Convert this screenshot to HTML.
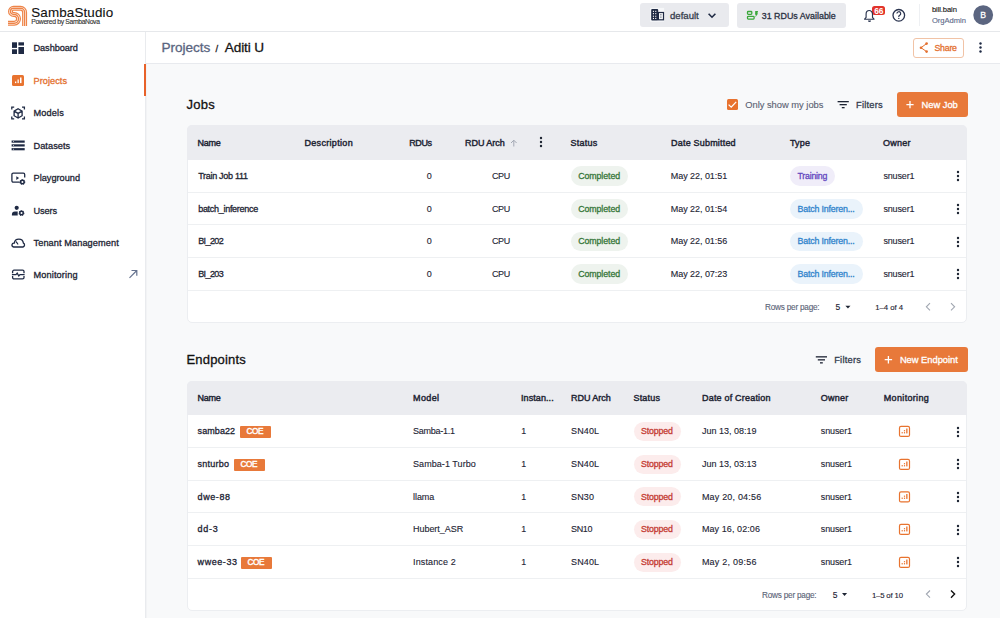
<!DOCTYPE html>
<html><head><meta charset="utf-8">
<style>
*{box-sizing:border-box;margin:0;padding:0}
html,body{width:1000px;height:618px;overflow:hidden;background:#f8f9fa;font-family:"Liberation Sans",sans-serif;position:relative}
.t{position:absolute;white-space:nowrap}
.r{position:absolute}
svg.ov{position:absolute;left:0;top:0;width:1000px;height:618px}
</style></head><body>
<div class="r" style="left:0.00px;top:0.00px;width:1000.00px;height:31.50px;background:#fff;"></div>
<div class="r" style="left:0.00px;top:31.00px;width:1000.00px;height:1.00px;background:#e6e8eb;"></div>
<div class="r" style="left:640.40px;top:3.00px;width:88.30px;height:24.00px;background:#e9eaee;border-radius:3px"></div>
<div class="r" style="left:736.90px;top:3.00px;width:108.80px;height:24.50px;background:#e9eaee;border-radius:3px"></div>
<div class="r" style="left:872.40px;top:5.60px;width:12.60px;height:9.40px;background:#e2332b;border-radius:2.5px"></div>
<div class="r" style="left:918.50px;top:4.20px;width:1.00px;height:21.60px;background:#eef0f3;"></div>
<div class="r" style="left:0.00px;top:32.00px;width:145.00px;height:586.00px;background:#fff;"></div>
<div class="r" style="left:144.50px;top:32.00px;width:1.00px;height:586.00px;background:#e9ebee;"></div>
<div class="r" style="left:145.50px;top:64.00px;width:1.00px;height:554.00px;background:#f2f3f5;"></div>
<div class="r" style="left:144.00px;top:64.00px;width:2.00px;height:32.00px;background:#e8622a;"></div>
<div class="r" style="left:145.50px;top:32.00px;width:854.50px;height:31.50px;background:#fff;"></div>
<div class="r" style="left:145.50px;top:63.30px;width:854.50px;height:0.90px;background:#e8eaee;"></div>
<div class="r" style="left:913.00px;top:38.00px;width:50.50px;height:19.50px;background:#fff;border:1px solid #f1c3a6;border-radius:3px"></div>
<div class="r" style="left:726.60px;top:98.90px;width:11.20px;height:11.30px;background:#e8722f;border-radius:1.5px"></div>
<div class="r" style="left:896.50px;top:92.20px;width:71.50px;height:24.50px;background:#e8793a;border-radius:3px"></div>
<div class="r" style="left:187.00px;top:125.00px;width:780.00px;height:197.50px;background:#fff;border:1px solid #eceef1;border-radius:5px"></div>
<div class="r" style="left:187.00px;top:125.00px;width:780.00px;height:34.50px;background:#ebecf0;border-radius:5px 5px 0 0"></div>
<div class="r" style="left:571.20px;top:166.30px;width:56.70px;height:19.60px;background:#eef3ee;border-radius:10px"></div>
<div class="r" style="left:789.80px;top:166.40px;width:45.20px;height:19.60px;background:#f0edf9;border-radius:10px"></div>
<div class="r" style="left:188.00px;top:192.00px;width:778.00px;height:1.00px;background:#eef0f2;"></div>
<div class="r" style="left:571.20px;top:199.30px;width:56.70px;height:19.60px;background:#eef3ee;border-radius:10px"></div>
<div class="r" style="left:789.80px;top:199.40px;width:73.10px;height:19.60px;background:#eaf3fb;border-radius:10px"></div>
<div class="r" style="left:188.00px;top:224.30px;width:778.00px;height:1.00px;background:#eef0f2;"></div>
<div class="r" style="left:571.20px;top:231.60px;width:56.70px;height:19.60px;background:#eef3ee;border-radius:10px"></div>
<div class="r" style="left:789.80px;top:231.70px;width:73.10px;height:19.60px;background:#eaf3fb;border-radius:10px"></div>
<div class="r" style="left:188.00px;top:256.80px;width:778.00px;height:1.00px;background:#eef0f2;"></div>
<div class="r" style="left:571.20px;top:264.10px;width:56.70px;height:19.60px;background:#eef3ee;border-radius:10px"></div>
<div class="r" style="left:789.80px;top:264.20px;width:73.10px;height:19.60px;background:#eaf3fb;border-radius:10px"></div>
<div class="r" style="left:188.00px;top:289.50px;width:778.00px;height:1.00px;background:#eef0f2;"></div>
<div class="r" style="left:875.20px;top:347.20px;width:92.80px;height:24.60px;background:#e8793a;border-radius:3px"></div>
<div class="r" style="left:187.00px;top:381.00px;width:780.00px;height:230.00px;background:#fff;border:1px solid #eceef1;border-radius:5px"></div>
<div class="r" style="left:187.00px;top:381.00px;width:780.00px;height:33.50px;background:#ebecf0;border-radius:5px 5px 0 0"></div>
<div class="r" style="left:239.50px;top:425.50px;width:31.50px;height:12.00px;background:#e8793a;border-radius:1px"></div>
<div class="r" style="left:633.80px;top:421.80px;width:46.80px;height:19.10px;background:#fcecec;border-radius:10px"></div>
<div class="r" style="left:188.00px;top:447.00px;width:778.00px;height:1.00px;background:#eef0f2;"></div>
<div class="r" style="left:233.50px;top:458.50px;width:31.50px;height:12.00px;background:#e8793a;border-radius:1px"></div>
<div class="r" style="left:633.80px;top:454.80px;width:46.80px;height:19.10px;background:#fcecec;border-radius:10px"></div>
<div class="r" style="left:188.00px;top:479.50px;width:778.00px;height:1.00px;background:#eef0f2;"></div>
<div class="r" style="left:633.80px;top:487.30px;width:46.80px;height:19.10px;background:#fcecec;border-radius:10px"></div>
<div class="r" style="left:188.00px;top:512.00px;width:778.00px;height:1.00px;background:#eef0f2;"></div>
<div class="r" style="left:633.80px;top:519.80px;width:46.80px;height:19.10px;background:#fcecec;border-radius:10px"></div>
<div class="r" style="left:188.00px;top:545.00px;width:778.00px;height:1.00px;background:#eef0f2;"></div>
<div class="r" style="left:240.50px;top:556.50px;width:31.50px;height:12.00px;background:#e8793a;border-radius:1px"></div>
<div class="r" style="left:633.80px;top:552.80px;width:46.80px;height:19.10px;background:#fcecec;border-radius:10px"></div>
<div class="r" style="left:188.00px;top:578.00px;width:778.00px;height:1.00px;background:#eef0f2;"></div>
<svg class="ov" width="1000" height="618" viewBox="0 0 1000 618"><g fill="none"><path d="M8,23.2 H14.2 A4.35,4.35 0 0 0 14.2,14.5 H13.6 A3.1,3.1 0 0 1 13.6,8.3 H20.5 A4.1,4.1 0 0 1 24.6,12.4 V26" stroke="#ee8448" stroke-width="5"/><path d="M8,23.2 H14.2 A4.35,4.35 0 0 0 14.2,14.5 H13.6 A3.1,3.1 0 0 1 13.6,8.3 H20.5 A4.1,4.1 0 0 1 24.6,12.4 V26" stroke="#fff" stroke-width="2.6"/><path d="M8,23.2 H14.2 A4.35,4.35 0 0 0 14.2,14.5 H13.6 A3.1,3.1 0 0 1 13.6,8.3 H20.5 A4.1,4.1 0 0 1 24.6,12.4 V26" stroke="#ee8448" stroke-width="1.4"/></g><rect x="650.2" y="7.9" width="13.9" height="13.9" fill="#f6f7f9"/><rect x="651.2" y="9" width="7" height="11.4" rx="1" fill="#1f2a44"/><rect x="658.4" y="12.5" width="5.1" height="7.3" fill="none" stroke="#1f2a44" stroke-width="1.2"/><g fill="#fff"><rect x="652.9" y="10.8" width="1.1" height="1.1"/><rect x="655.2" y="10.8" width="1.1" height="1.1"/><rect x="652.9" y="13.1" width="1.1" height="1.1"/><rect x="655.2" y="13.1" width="1.1" height="1.1"/><rect x="652.9" y="15.7" width="1.1" height="1.1"/><rect x="655.2" y="15.7" width="1.1" height="1.1"/><rect x="652.9" y="17.9" width="1.1" height="1.1"/><rect x="655.2" y="17.9" width="1.1" height="1.1"/></g><g fill="#1f2a44"><rect x="660.4" y="14.3" width="1" height="1"/><rect x="660.4" y="16.6" width="1" height="1"/></g><path d="M708.6,13.8 L712,17.2 L715.4,13.8" fill="none" stroke="#1f2a44" stroke-width="1.6"/><g fill="none" stroke="#3aa83a" stroke-width="1.3"><rect x="747.5" y="11.5" width="4.3" height="2.8" rx="0.8"/><rect x="747.5" y="16.3" width="6.6" height="2.8" rx="0.8"/></g><path d="M755.2,11 H758.1 L757.3,13.4 H758.1 L755.3,17.3 L755.9,14.7 H755.1 Z" fill="#3aa83a"/><path d="M864.6,19.2 h9.4 l-1.5,-1.8 v-3.3 a3.2,3.6 0 0 0 -6.4,0 v3.3z" fill="none" stroke="#2b3550" stroke-width="1.15" stroke-linejoin="round"/><path d="M868,20.6 a1.5,1.5 0 0 0 3,0" fill="#2b3550"/><circle cx="898.8" cy="15.3" r="5.8" fill="none" stroke="#2b3550" stroke-width="1.3"/><path d="M896.9,13.6 a1.9,1.9 0 1 1 2.6,1.8 c-0.5,0.2 -0.7,0.6 -0.7,1.2 v0.4" fill="none" stroke="#2b3550" stroke-width="1.2"/><circle cx="898.8" cy="18.4" r="0.7" fill="#2b3550"/><circle cx="983.2" cy="15.1" r="9.9" fill="#5b6580"/><g fill="#1f2a44"><rect x="12" y="42.3" width="5" height="5.6"/><rect x="18.4" y="42.3" width="5.6" height="3.2"/><rect x="12" y="49.3" width="5" height="4.7"/><rect x="18.4" y="47" width="5.6" height="7"/></g><rect x="12" y="75" width="12" height="11" rx="1.5" fill="#e8732f"/><g fill="#fff"><rect x="15" y="81.5" width="1.3" height="1.6"/><rect x="17.5" y="79.5" width="1.3" height="3.6"/><rect x="20" y="77.5" width="1.5" height="5.6"/></g><g fill="none" stroke="#1f2a44" stroke-width="1.3"><path d="M11.8,109.5 v-2.4 h2.4 M22,107.1 h2.4 v2.4 M24.4,116.5 v2.4 h-2.4 M14.2,118.9 h-2.4 v-2.4"/><path d="M18.1,108.8 l4,2.3 v4.6 l-4,2.3 l-4,-2.3 v-4.6z M14.1,111.1 l4,2.3 l4,-2.3 M18.1,113.4 v4.6"/></g><g fill="#1f2a44"><rect x="11.6" y="140.5" width="13.1" height="2.2"/><rect x="11.6" y="144.3" width="13.1" height="2.2"/><rect x="11.6" y="148.1" width="13.1" height="2.2"/></g><g fill="#fff"><rect x="13" y="141.2" width="0.8" height="0.8"/><rect x="13" y="145" width="0.8" height="0.8"/><rect x="13" y="148.8" width="0.8" height="0.8"/></g><path d="M19.8,182.1 h-6.6 a1.3,1.3 0 0 1 -1.3,-1.3 v-6.3 a1.3,1.3 0 0 1 1.3,-1.3 h10.2 a1.3,1.3 0 0 1 1.3,1.3 v3" fill="none" stroke="#1f2a44" stroke-width="1.3"/><path d="M16.3,176.2 v3.7 l2.8,-1.85z" fill="#1f2a44"/><circle cx="22.4" cy="182" r="1.75" fill="none" stroke="#1f2a44" stroke-width="1.5"/><circle cx="22.4" cy="182" r="2.35" fill="none" stroke="#1f2a44" stroke-width="1.1" stroke-dasharray="0.95 0.9"/><circle cx="16.7" cy="207.8" r="2.1" fill="#1f2a44"/><path d="M11.9,215.6 v-1.2 a3,3 0 0 1 3,-3 h2.8 v4.2z" fill="#1f2a44"/><circle cx="21.5" cy="213.1" r="1.75" fill="none" stroke="#1f2a44" stroke-width="1.5"/><circle cx="21.5" cy="213.1" r="2.35" fill="none" stroke="#1f2a44" stroke-width="1.1" stroke-dasharray="0.95 0.9"/><path d="M13.6,247 H23 A2.1,2.1 0 0 0 23.4,243.1 A4.6,4.6 0 0 0 14.3,243.1 A1.95,1.95 0 0 0 13.6,247z" fill="none" stroke="#1f2a44" stroke-width="1.3"/><path d="M16.3,241.9 l1.5,2.1" stroke="#1f2a44" stroke-width="1.2" stroke-linecap="round"/><g fill="none" stroke="#1f2a44" stroke-width="1.3"><path d="M12.6,273.2 v-1.6 a1.4,1.4 0 0 1 1.4,-1.4 h8.6 a1.4,1.4 0 0 1 1.4,1.4 v1.6 M12.6,275.9 v1.6 a1.4,1.4 0 0 0 1.4,1.4 h8.6 a1.4,1.4 0 0 0 1.4,-1.4 v-1.6"/><path d="M11.9,274.6 h4.1 l1.2,-1.4 l1.6,2.8 l1.2,-1.4 h4.6"/></g><path d="M129.5,277.8 l7.3,-7.3 M131.5,270.5 h5.3 v5.3" fill="none" stroke="#66738f" stroke-width="1.2"/><g fill="#e4702f"><circle cx="926.6" cy="43.6" r="1.3"/><circle cx="921" cy="47.7" r="1.3"/><circle cx="926.6" cy="51.6" r="1.3"/></g><path d="M926.6,43.6 L921,47.7 L926.6,51.6" fill="none" stroke="#e4702f" stroke-width="1"/><g fill="#1f2a44"><circle cx="980.5" cy="43.5" r="1.2"/><circle cx="980.5" cy="47.5" r="1.2"/><circle cx="980.5" cy="51.5" r="1.2"/></g><path d="M728.6,104.6 l2.6,2.5 l5,-5.2" fill="none" stroke="#fff" stroke-width="1.3"/><g fill="#1d2433"><rect x="837.6" y="101" width="11.2" height="1.3"/><rect x="839.6" y="104" width="7.2" height="1.3"/><rect x="841.8000000000001" y="107" width="2.8" height="1.3"/></g><path d="M910,101 v7.2 M906.4,104.6 h7.2" stroke="#fff" stroke-width="1.3"/><path d="M513.8,146.5 v-6.2 M511,143 l2.8,-2.8 l2.8,2.8" fill="none" stroke="#a3a9b4" stroke-width="1"/><g fill="#1d2433"><circle cx="541" cy="138" r="1.2"/><circle cx="541" cy="142" r="1.2"/><circle cx="541" cy="146" r="1.2"/></g><g fill="#1d2433"><circle cx="958" cy="172" r="1.2"/><circle cx="958" cy="176" r="1.2"/><circle cx="958" cy="180" r="1.2"/></g><g fill="#1d2433"><circle cx="958" cy="205" r="1.2"/><circle cx="958" cy="209" r="1.2"/><circle cx="958" cy="213" r="1.2"/></g><g fill="#1d2433"><circle cx="958" cy="238" r="1.2"/><circle cx="958" cy="242" r="1.2"/><circle cx="958" cy="246" r="1.2"/></g><g fill="#1d2433"><circle cx="958" cy="270" r="1.2"/><circle cx="958" cy="274" r="1.2"/><circle cx="958" cy="278" r="1.2"/></g><path d="M845.4,305.8 h5.1 l-2.55,2.8z" fill="#1d2433"/><path d="M930,303.2 l-3.6,3.6 l3.6,3.6" fill="none" stroke="#a0a6b0" stroke-width="1.1"/><path d="M951,303.2 l3.6,3.6 l-3.6,3.6" fill="none" stroke="#a0a6b0" stroke-width="1.1"/><g fill="#1d2433"><rect x="815.8" y="356.2" width="11.2" height="1.3"/><rect x="817.8" y="359.2" width="7.2" height="1.3"/><rect x="820.0" y="362.2" width="2.8" height="1.3"/></g><path d="M888.4,356 v7.4 M884.7,359.7 h7.4" stroke="#fff" stroke-width="1.3"/><rect x="899.5" y="426.4" width="10" height="10" rx="1.5" fill="none" stroke="#e8732f" stroke-width="1.2"/><g fill="#e8732f"><rect x="901.6" y="432.1" width="1.2" height="1.3"/><rect x="903.9" y="430.1" width="1.2" height="1.2"/><rect x="903.9" y="432.1" width="1.2" height="1.3"/><rect x="906.2" y="428.5" width="1.3" height="4.9"/></g><g fill="#1d2433"><circle cx="958" cy="428" r="1.2"/><circle cx="958" cy="432" r="1.2"/><circle cx="958" cy="436" r="1.2"/></g><rect x="899.5" y="459.4" width="10" height="10" rx="1.5" fill="none" stroke="#e8732f" stroke-width="1.2"/><g fill="#e8732f"><rect x="901.6" y="465.1" width="1.2" height="1.3"/><rect x="903.9" y="463.1" width="1.2" height="1.2"/><rect x="903.9" y="465.1" width="1.2" height="1.3"/><rect x="906.2" y="461.5" width="1.3" height="4.9"/></g><g fill="#1d2433"><circle cx="958" cy="460" r="1.2"/><circle cx="958" cy="464" r="1.2"/><circle cx="958" cy="468" r="1.2"/></g><rect x="899.5" y="491.9" width="10" height="10" rx="1.5" fill="none" stroke="#e8732f" stroke-width="1.2"/><g fill="#e8732f"><rect x="901.6" y="497.6" width="1.2" height="1.3"/><rect x="903.9" y="495.6" width="1.2" height="1.2"/><rect x="903.9" y="497.6" width="1.2" height="1.3"/><rect x="906.2" y="494" width="1.3" height="4.9"/></g><g fill="#1d2433"><circle cx="958" cy="493" r="1.2"/><circle cx="958" cy="497" r="1.2"/><circle cx="958" cy="501" r="1.2"/></g><rect x="899.5" y="524.4" width="10" height="10" rx="1.5" fill="none" stroke="#e8732f" stroke-width="1.2"/><g fill="#e8732f"><rect x="901.6" y="530.1" width="1.2" height="1.3"/><rect x="903.9" y="528.1" width="1.2" height="1.2"/><rect x="903.9" y="530.1" width="1.2" height="1.3"/><rect x="906.2" y="526.5" width="1.3" height="4.9"/></g><g fill="#1d2433"><circle cx="958" cy="526" r="1.2"/><circle cx="958" cy="530" r="1.2"/><circle cx="958" cy="534" r="1.2"/></g><rect x="899.5" y="557.4" width="10" height="10" rx="1.5" fill="none" stroke="#e8732f" stroke-width="1.2"/><g fill="#e8732f"><rect x="901.6" y="563.1" width="1.2" height="1.3"/><rect x="903.9" y="561.1" width="1.2" height="1.2"/><rect x="903.9" y="563.1" width="1.2" height="1.3"/><rect x="906.2" y="559.5" width="1.3" height="4.9"/></g><g fill="#1d2433"><circle cx="958" cy="558" r="1.2"/><circle cx="958" cy="562" r="1.2"/><circle cx="958" cy="566" r="1.2"/></g><path d="M842,593.1 h5.1 l-2.55,2.8z" fill="#1d2433"/><path d="M930,590.5 l-3.6,3.6 l3.6,3.6" fill="none" stroke="#a0a6b0" stroke-width="1.1"/><path d="M951,590.5 l3.6,3.6 l-3.6,3.6" fill="none" stroke="#111" stroke-width="1.4"/></svg>
<div class="t" style="left:31.20px;top:2.85px;font-size:13.40px;line-height:20px;font-weight:normal;color:#111;-webkit-text-stroke:0.12px #111;letter-spacing:0.155px;">SambaStudio</div>
<div class="t" style="left:31.20px;top:12.30px;font-size:6.80px;line-height:20px;font-weight:normal;color:#333;-webkit-text-stroke:0.12px #333;letter-spacing:-0.338px;">Powered by SambaNova</div>
<div class="t" style="left:670.00px;top:5.50px;font-size:9.60px;line-height:20px;font-weight:normal;color:#363d4d;-webkit-text-stroke:0.3px #363d4d;letter-spacing:-0.004px;">default</div>
<div class="t" style="left:761.70px;top:5.90px;font-size:8.90px;line-height:20px;font-weight:normal;color:#2a3142;-webkit-text-stroke:0.3px #2a3142;letter-spacing:0.016px;">31 RDUs Available</div>
<div class="t" style="left:872.40px;top:0.90px;font-size:8.40px;line-height:20px;font-weight:bold;color:#fff;width:12.6px;text-align:center;letter-spacing:-0.3px">66</div>
<div class="t" style="left:932.00px;top:0.00px;font-size:7.60px;line-height:20px;font-weight:normal;color:#111;-webkit-text-stroke:0.12px #111;letter-spacing:-0.109px;">bill.bain</div>
<div class="t" style="left:932.00px;top:11.40px;font-size:7.60px;line-height:20px;font-weight:normal;color:#5d6a8a;-webkit-text-stroke:0.12px #5d6a8a;letter-spacing:-0.045px;">OrgAdmin</div>
<div class="t" style="left:973.30px;top:5.40px;font-size:8.60px;line-height:20px;font-weight:normal;color:#fff;-webkit-text-stroke:0.3px #fff;width:19.8px;text-align:center">B</div>
<div class="t" style="left:33.50px;top:38.30px;font-size:9.20px;line-height:20px;font-weight:normal;color:#1d2433;-webkit-text-stroke:0.3px #1d2433;letter-spacing:-0.064px;">Dashboard</div>
<div class="t" style="left:33.50px;top:70.80px;font-size:9.20px;line-height:20px;font-weight:normal;color:#e4702f;-webkit-text-stroke:0.3px #e4702f;letter-spacing:0.052px;">Projects</div>
<div class="t" style="left:33.50px;top:103.20px;font-size:9.20px;line-height:20px;font-weight:normal;color:#1d2433;-webkit-text-stroke:0.3px #1d2433;letter-spacing:0.128px;">Models</div>
<div class="t" style="left:33.50px;top:136.00px;font-size:9.20px;line-height:20px;font-weight:normal;color:#1d2433;-webkit-text-stroke:0.3px #1d2433;letter-spacing:0.056px;">Datasets</div>
<div class="t" style="left:33.50px;top:168.30px;font-size:9.20px;line-height:20px;font-weight:normal;color:#1d2433;-webkit-text-stroke:0.3px #1d2433;letter-spacing:0.006px;">Playground</div>
<div class="t" style="left:33.50px;top:201.00px;font-size:9.20px;line-height:20px;font-weight:normal;color:#1d2433;-webkit-text-stroke:0.3px #1d2433;letter-spacing:-0.106px;">Users</div>
<div class="t" style="left:33.50px;top:233.30px;font-size:9.20px;line-height:20px;font-weight:normal;color:#1d2433;-webkit-text-stroke:0.3px #1d2433;letter-spacing:0.089px;">Tenant Management</div>
<div class="t" style="left:33.50px;top:264.50px;font-size:9.20px;line-height:20px;font-weight:normal;color:#1d2433;-webkit-text-stroke:0.3px #1d2433;letter-spacing:0.127px;">Monitoring</div>
<div class="t" style="left:161.60px;top:38.20px;font-size:13.60px;line-height:20px;font-weight:normal;color:#5a6580;-webkit-text-stroke:0.3px #5a6580;letter-spacing:-0.047px;">Projects</div>
<div class="t" style="left:215.60px;top:39.20px;font-size:9.50px;line-height:20px;font-weight:normal;color:#222;-webkit-text-stroke:0.3px #222;">/</div>
<div class="t" style="left:224.80px;top:38.20px;font-size:13.60px;line-height:20px;font-weight:normal;color:#141414;-webkit-text-stroke:0.3px #141414;letter-spacing:-0.143px;">Aditi U</div>
<div class="t" style="left:934.50px;top:38.00px;font-size:8.80px;line-height:20px;font-weight:normal;color:#e4702f;-webkit-text-stroke:0.3px #e4702f;letter-spacing:-0.246px;">Share</div>
<div class="t" style="left:186.50px;top:95.00px;font-size:13.00px;line-height:20px;font-weight:normal;color:#111;-webkit-text-stroke:0.3px #111;letter-spacing:0.247px;">Jobs</div>
<div class="t" style="left:745.20px;top:95.20px;font-size:9.33px;line-height:20px;font-weight:normal;color:#5b6272;-webkit-text-stroke:0.12px #5b6272;">Only show my jobs</div>
<div class="t" style="left:856.00px;top:95.00px;font-size:9.30px;line-height:20px;font-weight:normal;color:#333b4d;-webkit-text-stroke:0.3px #333b4d;letter-spacing:0.231px;">Filters</div>
<div class="t" style="left:921.60px;top:94.90px;font-size:9.40px;line-height:20px;font-weight:normal;color:#fff;-webkit-text-stroke:0.3px #fff;letter-spacing:-0.045px;">New Job</div>
<div class="t" style="left:197.40px;top:132.80px;font-size:9.00px;line-height:20px;font-weight:normal;color:#1d2433;-webkit-text-stroke:0.42px #1d2433;letter-spacing:-0.203px;">Name</div>
<div class="t" style="left:304.40px;top:132.80px;font-size:9.00px;line-height:20px;font-weight:normal;color:#1d2433;-webkit-text-stroke:0.42px #1d2433;letter-spacing:0.328px;">Description</div>
<div class="t" style="left:465.00px;top:132.80px;font-size:9.00px;line-height:20px;font-weight:normal;color:#1d2433;-webkit-text-stroke:0.42px #1d2433;letter-spacing:-0.044px;">RDU Arch</div>
<div class="t" style="left:570.60px;top:132.80px;font-size:9.00px;line-height:20px;font-weight:normal;color:#1d2433;-webkit-text-stroke:0.42px #1d2433;letter-spacing:0.237px;">Status</div>
<div class="t" style="left:671.10px;top:132.80px;font-size:9.00px;line-height:20px;font-weight:normal;color:#1d2433;-webkit-text-stroke:0.42px #1d2433;letter-spacing:0.190px;">Date Submitted</div>
<div class="t" style="left:789.90px;top:132.80px;font-size:9.00px;line-height:20px;font-weight:normal;color:#1d2433;-webkit-text-stroke:0.42px #1d2433;letter-spacing:0.196px;">Type</div>
<div class="t" style="left:882.90px;top:132.80px;font-size:9.00px;line-height:20px;font-weight:normal;color:#1d2433;-webkit-text-stroke:0.42px #1d2433;letter-spacing:0.273px;">Owner</div>
<div class="t" style="left:409.30px;top:132.80px;font-size:9.00px;line-height:20px;font-weight:normal;color:#1d2433;-webkit-text-stroke:0.42px #1d2433;letter-spacing:-0.433px;">RDUs</div>
<div class="t" style="left:198.20px;top:166.10px;font-size:9.00px;line-height:20px;font-weight:normal;color:#1d2433;-webkit-text-stroke:0.3px #1d2433;letter-spacing:-0.297px;">Train Job 111</div>
<div class="t" style="left:426.80px;top:166.10px;font-size:9.00px;line-height:20px;font-weight:normal;color:#1d2433;-webkit-text-stroke:0.12px #1d2433;">0</div>
<div class="t" style="left:492.00px;top:166.10px;font-size:9.00px;line-height:20px;font-weight:normal;color:#1d2433;-webkit-text-stroke:0.12px #1d2433;letter-spacing:-0.401px;">CPU</div>
<div class="t" style="left:578.20px;top:166.10px;font-size:8.80px;line-height:20px;font-weight:normal;color:#37773a;-webkit-text-stroke:0.3px #37773a;letter-spacing:-0.070px;">Completed</div>
<div class="t" style="left:670.80px;top:166.10px;font-size:9.00px;line-height:20px;font-weight:normal;color:#1d2433;-webkit-text-stroke:0.12px #1d2433;letter-spacing:-0.053px;">May 22, 01:51</div>
<div class="t" style="left:797.50px;top:166.10px;font-size:8.80px;line-height:20px;font-weight:normal;color:#6448c0;-webkit-text-stroke:0.3px #6448c0;letter-spacing:-0.224px;">Training</div>
<div class="t" style="left:883.40px;top:166.10px;font-size:9.00px;line-height:20px;font-weight:normal;color:#1d2433;-webkit-text-stroke:0.12px #1d2433;letter-spacing:-0.136px;">snuser1</div>
<div class="t" style="left:198.20px;top:199.10px;font-size:9.00px;line-height:20px;font-weight:normal;color:#1d2433;-webkit-text-stroke:0.3px #1d2433;letter-spacing:-0.289px;">batch_inference</div>
<div class="t" style="left:426.80px;top:199.10px;font-size:9.00px;line-height:20px;font-weight:normal;color:#1d2433;-webkit-text-stroke:0.12px #1d2433;">0</div>
<div class="t" style="left:492.00px;top:199.10px;font-size:9.00px;line-height:20px;font-weight:normal;color:#1d2433;-webkit-text-stroke:0.12px #1d2433;letter-spacing:-0.401px;">CPU</div>
<div class="t" style="left:578.20px;top:199.10px;font-size:8.80px;line-height:20px;font-weight:normal;color:#37773a;-webkit-text-stroke:0.3px #37773a;letter-spacing:-0.070px;">Completed</div>
<div class="t" style="left:670.80px;top:199.10px;font-size:9.00px;line-height:20px;font-weight:normal;color:#1d2433;-webkit-text-stroke:0.12px #1d2433;letter-spacing:-0.053px;">May 22, 01:54</div>
<div class="t" style="left:797.50px;top:199.10px;font-size:8.80px;line-height:20px;font-weight:normal;color:#3084cc;-webkit-text-stroke:0.3px #3084cc;letter-spacing:-0.165px;">Batch Inferen...</div>
<div class="t" style="left:883.40px;top:199.10px;font-size:9.00px;line-height:20px;font-weight:normal;color:#1d2433;-webkit-text-stroke:0.12px #1d2433;letter-spacing:-0.136px;">snuser1</div>
<div class="t" style="left:198.20px;top:231.40px;font-size:9.00px;line-height:20px;font-weight:normal;color:#1d2433;-webkit-text-stroke:0.3px #1d2433;letter-spacing:-0.585px;">BI_202</div>
<div class="t" style="left:426.80px;top:231.40px;font-size:9.00px;line-height:20px;font-weight:normal;color:#1d2433;-webkit-text-stroke:0.12px #1d2433;">0</div>
<div class="t" style="left:492.00px;top:231.40px;font-size:9.00px;line-height:20px;font-weight:normal;color:#1d2433;-webkit-text-stroke:0.12px #1d2433;letter-spacing:-0.401px;">CPU</div>
<div class="t" style="left:578.20px;top:231.40px;font-size:8.80px;line-height:20px;font-weight:normal;color:#37773a;-webkit-text-stroke:0.3px #37773a;letter-spacing:-0.070px;">Completed</div>
<div class="t" style="left:670.80px;top:231.40px;font-size:9.00px;line-height:20px;font-weight:normal;color:#1d2433;-webkit-text-stroke:0.12px #1d2433;letter-spacing:-0.053px;">May 22, 01:56</div>
<div class="t" style="left:797.50px;top:231.40px;font-size:8.80px;line-height:20px;font-weight:normal;color:#3084cc;-webkit-text-stroke:0.3px #3084cc;letter-spacing:-0.165px;">Batch Inferen...</div>
<div class="t" style="left:883.40px;top:231.40px;font-size:9.00px;line-height:20px;font-weight:normal;color:#1d2433;-webkit-text-stroke:0.12px #1d2433;letter-spacing:-0.136px;">snuser1</div>
<div class="t" style="left:198.20px;top:263.90px;font-size:9.00px;line-height:20px;font-weight:normal;color:#1d2433;-webkit-text-stroke:0.3px #1d2433;letter-spacing:-0.585px;">BI_203</div>
<div class="t" style="left:426.80px;top:263.90px;font-size:9.00px;line-height:20px;font-weight:normal;color:#1d2433;-webkit-text-stroke:0.12px #1d2433;">0</div>
<div class="t" style="left:492.00px;top:263.90px;font-size:9.00px;line-height:20px;font-weight:normal;color:#1d2433;-webkit-text-stroke:0.12px #1d2433;letter-spacing:-0.401px;">CPU</div>
<div class="t" style="left:578.20px;top:263.90px;font-size:8.80px;line-height:20px;font-weight:normal;color:#37773a;-webkit-text-stroke:0.3px #37773a;letter-spacing:-0.070px;">Completed</div>
<div class="t" style="left:670.80px;top:263.90px;font-size:9.00px;line-height:20px;font-weight:normal;color:#1d2433;-webkit-text-stroke:0.12px #1d2433;letter-spacing:-0.053px;">May 22, 07:23</div>
<div class="t" style="left:797.50px;top:263.90px;font-size:8.80px;line-height:20px;font-weight:normal;color:#3084cc;-webkit-text-stroke:0.3px #3084cc;letter-spacing:-0.165px;">Batch Inferen...</div>
<div class="t" style="left:883.40px;top:263.90px;font-size:9.00px;line-height:20px;font-weight:normal;color:#1d2433;-webkit-text-stroke:0.12px #1d2433;letter-spacing:-0.136px;">snuser1</div>
<div class="t" style="left:765.00px;top:298.30px;font-size:8.20px;line-height:20px;font-weight:normal;color:#5b6478;-webkit-text-stroke:0.12px #5b6478;letter-spacing:-0.210px;">Rows per page:</div>
<div class="t" style="left:835.60px;top:297.30px;font-size:8.50px;line-height:20px;font-weight:normal;color:#1d2433;-webkit-text-stroke:0.12px #1d2433;">5</div>
<div class="t" style="left:875.30px;top:298.30px;font-size:7.80px;line-height:20px;font-weight:normal;color:#1d2433;-webkit-text-stroke:0.12px #1d2433;letter-spacing:-0.070px;">1–4 of 4</div>
<div class="t" style="left:186.50px;top:350.30px;font-size:13.00px;line-height:20px;font-weight:normal;color:#111;-webkit-text-stroke:0.3px #111;letter-spacing:0.172px;">Endpoints</div>
<div class="t" style="left:834.20px;top:350.40px;font-size:9.30px;line-height:20px;font-weight:normal;color:#333b4d;-webkit-text-stroke:0.3px #333b4d;letter-spacing:0.231px;">Filters</div>
<div class="t" style="left:899.90px;top:350.40px;font-size:9.40px;line-height:20px;font-weight:normal;color:#fff;-webkit-text-stroke:0.3px #fff;letter-spacing:-0.039px;">New Endpoint</div>
<div class="t" style="left:197.40px;top:388.00px;font-size:9.00px;line-height:20px;font-weight:normal;color:#1d2433;-webkit-text-stroke:0.42px #1d2433;letter-spacing:-0.203px;">Name</div>
<div class="t" style="left:413.00px;top:388.00px;font-size:9.00px;line-height:20px;font-weight:normal;color:#1d2433;-webkit-text-stroke:0.42px #1d2433;letter-spacing:0.397px;">Model</div>
<div class="t" style="left:521.00px;top:388.00px;font-size:9.00px;line-height:20px;font-weight:normal;color:#1d2433;-webkit-text-stroke:0.42px #1d2433;letter-spacing:0.085px;">Instan...</div>
<div class="t" style="left:571.00px;top:388.00px;font-size:9.00px;line-height:20px;font-weight:normal;color:#1d2433;-webkit-text-stroke:0.42px #1d2433;letter-spacing:-0.044px;">RDU Arch</div>
<div class="t" style="left:633.40px;top:388.00px;font-size:9.00px;line-height:20px;font-weight:normal;color:#1d2433;-webkit-text-stroke:0.42px #1d2433;letter-spacing:0.237px;">Status</div>
<div class="t" style="left:702.00px;top:388.00px;font-size:9.00px;line-height:20px;font-weight:normal;color:#1d2433;-webkit-text-stroke:0.42px #1d2433;letter-spacing:0.198px;">Date of Creation</div>
<div class="t" style="left:820.80px;top:388.00px;font-size:9.00px;line-height:20px;font-weight:normal;color:#1d2433;-webkit-text-stroke:0.42px #1d2433;letter-spacing:0.248px;">Owner</div>
<div class="t" style="left:883.80px;top:388.00px;font-size:9.00px;line-height:20px;font-weight:normal;color:#1d2433;-webkit-text-stroke:0.42px #1d2433;letter-spacing:0.331px;">Monitoring</div>
<div class="t" style="left:197.60px;top:421.10px;font-size:9.00px;line-height:20px;font-weight:normal;color:#1d2433;-webkit-text-stroke:0.3px #1d2433;letter-spacing:0.079px;">samba22</div>
<div class="t" style="left:246.50px;top:422.30px;font-size:8.20px;line-height:20px;font-weight:normal;color:#fff;-webkit-text-stroke:0.42px #fff;letter-spacing:-0.385px;">COE</div>
<div class="t" style="left:413.00px;top:421.10px;font-size:9.00px;line-height:20px;font-weight:normal;color:#1d2433;-webkit-text-stroke:0.12px #1d2433;letter-spacing:-0.253px;">Samba-1.1</div>
<div class="t" style="left:521.20px;top:421.10px;font-size:8.90px;line-height:20px;font-weight:normal;color:#1d2433;-webkit-text-stroke:0.12px #1d2433;">1</div>
<div class="t" style="left:571.00px;top:421.10px;font-size:9.00px;line-height:20px;font-weight:normal;color:#1d2433;-webkit-text-stroke:0.12px #1d2433;letter-spacing:0.145px;">SN40L</div>
<div class="t" style="left:641.00px;top:421.10px;font-size:8.80px;line-height:20px;font-weight:normal;color:#c53b33;-webkit-text-stroke:0.3px #c53b33;letter-spacing:-0.131px;">Stopped</div>
<div class="t" style="left:701.90px;top:421.10px;font-size:9.00px;line-height:20px;font-weight:normal;color:#1d2433;-webkit-text-stroke:0.12px #1d2433;letter-spacing:-0.004px;">Jun 13, 08:19</div>
<div class="t" style="left:820.80px;top:421.10px;font-size:9.00px;line-height:20px;font-weight:normal;color:#1d2433;-webkit-text-stroke:0.12px #1d2433;letter-spacing:-0.136px;">snuser1</div>
<div class="t" style="left:197.60px;top:454.10px;font-size:9.00px;line-height:20px;font-weight:normal;color:#1d2433;-webkit-text-stroke:0.3px #1d2433;letter-spacing:0.247px;">snturbo</div>
<div class="t" style="left:240.50px;top:455.30px;font-size:8.20px;line-height:20px;font-weight:normal;color:#fff;-webkit-text-stroke:0.42px #fff;letter-spacing:-0.385px;">COE</div>
<div class="t" style="left:413.00px;top:454.10px;font-size:9.00px;line-height:20px;font-weight:normal;color:#1d2433;-webkit-text-stroke:0.12px #1d2433;letter-spacing:0.064px;">Samba-1 Turbo</div>
<div class="t" style="left:521.20px;top:454.10px;font-size:8.90px;line-height:20px;font-weight:normal;color:#1d2433;-webkit-text-stroke:0.12px #1d2433;">1</div>
<div class="t" style="left:571.00px;top:454.10px;font-size:9.00px;line-height:20px;font-weight:normal;color:#1d2433;-webkit-text-stroke:0.12px #1d2433;letter-spacing:0.145px;">SN40L</div>
<div class="t" style="left:641.00px;top:454.10px;font-size:8.80px;line-height:20px;font-weight:normal;color:#c53b33;-webkit-text-stroke:0.3px #c53b33;letter-spacing:-0.131px;">Stopped</div>
<div class="t" style="left:701.90px;top:454.10px;font-size:9.00px;line-height:20px;font-weight:normal;color:#1d2433;-webkit-text-stroke:0.12px #1d2433;letter-spacing:0.013px;">Jun 13, 03:13</div>
<div class="t" style="left:820.80px;top:454.10px;font-size:9.00px;line-height:20px;font-weight:normal;color:#1d2433;-webkit-text-stroke:0.12px #1d2433;letter-spacing:-0.136px;">snuser1</div>
<div class="t" style="left:197.60px;top:486.60px;font-size:9.00px;line-height:20px;font-weight:normal;color:#1d2433;-webkit-text-stroke:0.3px #1d2433;letter-spacing:0.576px;">dwe-88</div>
<div class="t" style="left:413.00px;top:486.60px;font-size:9.00px;line-height:20px;font-weight:normal;color:#1d2433;-webkit-text-stroke:0.12px #1d2433;letter-spacing:-0.052px;">llama</div>
<div class="t" style="left:521.20px;top:486.60px;font-size:8.90px;line-height:20px;font-weight:normal;color:#1d2433;-webkit-text-stroke:0.12px #1d2433;">1</div>
<div class="t" style="left:571.00px;top:486.60px;font-size:9.00px;line-height:20px;font-weight:normal;color:#1d2433;-webkit-text-stroke:0.12px #1d2433;letter-spacing:0.162px;">SN30</div>
<div class="t" style="left:641.00px;top:486.60px;font-size:8.80px;line-height:20px;font-weight:normal;color:#c53b33;-webkit-text-stroke:0.3px #c53b33;letter-spacing:-0.131px;">Stopped</div>
<div class="t" style="left:701.90px;top:486.60px;font-size:9.00px;line-height:20px;font-weight:normal;color:#1d2433;-webkit-text-stroke:0.12px #1d2433;letter-spacing:0.189px;">May 20, 04:56</div>
<div class="t" style="left:820.80px;top:486.60px;font-size:9.00px;line-height:20px;font-weight:normal;color:#1d2433;-webkit-text-stroke:0.12px #1d2433;letter-spacing:-0.136px;">snuser1</div>
<div class="t" style="left:197.60px;top:519.10px;font-size:9.00px;line-height:20px;font-weight:normal;color:#1d2433;-webkit-text-stroke:0.3px #1d2433;letter-spacing:0.729px;">dd-3</div>
<div class="t" style="left:413.00px;top:519.10px;font-size:9.00px;line-height:20px;font-weight:normal;color:#1d2433;-webkit-text-stroke:0.12px #1d2433;letter-spacing:-0.036px;">Hubert_ASR</div>
<div class="t" style="left:521.20px;top:519.10px;font-size:8.90px;line-height:20px;font-weight:normal;color:#1d2433;-webkit-text-stroke:0.12px #1d2433;">1</div>
<div class="t" style="left:571.00px;top:519.10px;font-size:9.00px;line-height:20px;font-weight:normal;color:#1d2433;-webkit-text-stroke:0.12px #1d2433;letter-spacing:-0.371px;">SN10</div>
<div class="t" style="left:641.00px;top:519.10px;font-size:8.80px;line-height:20px;font-weight:normal;color:#c53b33;-webkit-text-stroke:0.3px #c53b33;letter-spacing:-0.131px;">Stopped</div>
<div class="t" style="left:701.90px;top:519.10px;font-size:9.00px;line-height:20px;font-weight:normal;color:#1d2433;-webkit-text-stroke:0.12px #1d2433;letter-spacing:0.080px;">May 16, 02:06</div>
<div class="t" style="left:820.80px;top:519.10px;font-size:9.00px;line-height:20px;font-weight:normal;color:#1d2433;-webkit-text-stroke:0.12px #1d2433;letter-spacing:-0.136px;">snuser1</div>
<div class="t" style="left:197.60px;top:552.10px;font-size:9.00px;line-height:20px;font-weight:normal;color:#1d2433;-webkit-text-stroke:0.3px #1d2433;letter-spacing:0.564px;">wwee-33</div>
<div class="t" style="left:247.50px;top:553.30px;font-size:8.20px;line-height:20px;font-weight:normal;color:#fff;-webkit-text-stroke:0.42px #fff;letter-spacing:-0.385px;">COE</div>
<div class="t" style="left:413.00px;top:552.10px;font-size:9.00px;line-height:20px;font-weight:normal;color:#1d2433;-webkit-text-stroke:0.12px #1d2433;letter-spacing:0.130px;">Instance 2</div>
<div class="t" style="left:521.20px;top:552.10px;font-size:8.90px;line-height:20px;font-weight:normal;color:#1d2433;-webkit-text-stroke:0.12px #1d2433;">1</div>
<div class="t" style="left:571.00px;top:552.10px;font-size:9.00px;line-height:20px;font-weight:normal;color:#1d2433;-webkit-text-stroke:0.12px #1d2433;letter-spacing:0.145px;">SN40L</div>
<div class="t" style="left:641.00px;top:552.10px;font-size:8.80px;line-height:20px;font-weight:normal;color:#c53b33;-webkit-text-stroke:0.3px #c53b33;letter-spacing:-0.131px;">Stopped</div>
<div class="t" style="left:701.90px;top:552.10px;font-size:9.00px;line-height:20px;font-weight:normal;color:#1d2433;-webkit-text-stroke:0.12px #1d2433;letter-spacing:0.224px;">May 2, 09:56</div>
<div class="t" style="left:820.80px;top:552.10px;font-size:9.00px;line-height:20px;font-weight:normal;color:#1d2433;-webkit-text-stroke:0.12px #1d2433;letter-spacing:-0.136px;">snuser1</div>
<div class="t" style="left:762.00px;top:585.60px;font-size:8.20px;line-height:20px;font-weight:normal;color:#5b6478;-webkit-text-stroke:0.12px #5b6478;letter-spacing:-0.210px;">Rows per page:</div>
<div class="t" style="left:832.80px;top:584.60px;font-size:8.50px;line-height:20px;font-weight:normal;color:#1d2433;-webkit-text-stroke:0.12px #1d2433;">5</div>
<div class="t" style="left:871.90px;top:585.60px;font-size:7.80px;line-height:20px;font-weight:normal;color:#1d2433;-webkit-text-stroke:0.12px #1d2433;letter-spacing:-0.179px;">1–5 of 10</div>
</body></html>
